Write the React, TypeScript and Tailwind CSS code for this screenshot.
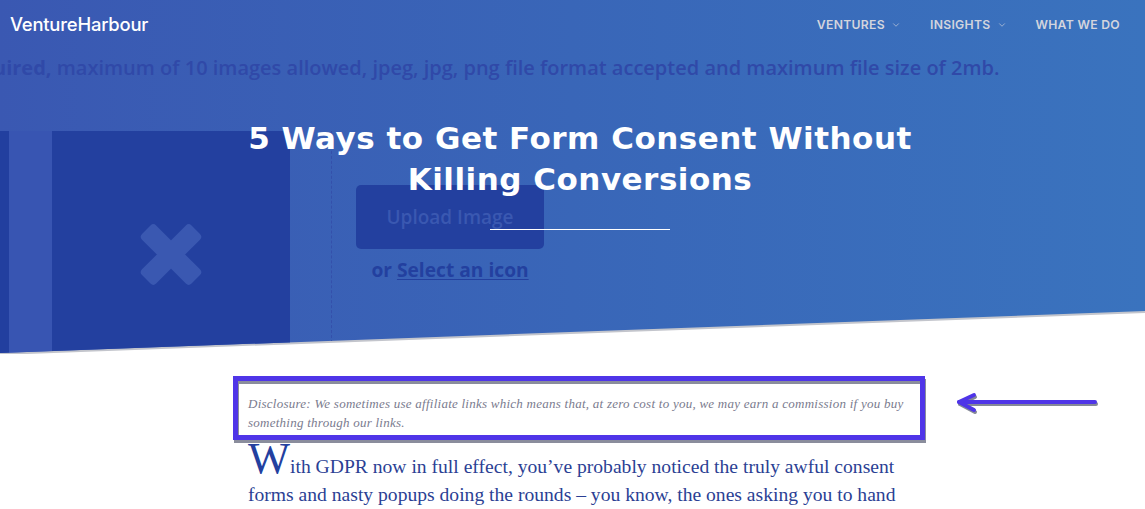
import { ChevronDown } from 'lucide-react'

const NAV = [
  { label: 'VENTURES', menu: true },
  { label: 'INSIGHTS', menu: true },
  { label: 'WHAT WE DO', menu: false },
]

// the washed-out form screenshot sitting behind the hero text
const HeroBackdrop = () => (
  <div className="absolute inset-0 flex flex-col pt-[54px] font-['Open_Sans',sans-serif]">
    <p className="-ml-[7px] h-[27px] text-[20px] leading-[27px] font-semibold whitespace-nowrap text-[#3049a8]">
      <span className="font-bold">uired,</span> maximum of 10 images allowed, jpeg, jpg, png file format accepted and maximum file size of 2mb.
    </p>
    <div className="mt-[50px] flex h-[240px]">
      <div className="w-[9px] bg-[#223f9f]" />
      <div className="w-[43px] bg-[#3855b2]" />
      <div className="flex w-[238px] justify-center bg-[#23409f] pt-[91px]">
        <svg width="64" height="65" viewBox="0 0 64 65" fill="#3a58b1">
          <rect x="-3" y="22.5" width="70" height="20" rx="4" transform="rotate(45 32 32.5)" />
          <rect x="-3" y="22.5" width="70" height="20" rx="4" transform="rotate(-45 32 32.5)" />
        </svg>
      </div>
      <div className="ml-[41px] border-l border-dashed border-[#3450ab]" />
      <div className="ml-[24px] flex flex-col items-center pt-[54px]">
        <div className="flex h-[64px] w-[188px] items-center justify-center rounded-[5px] bg-[#23409f] text-[19px] font-semibold text-[#3a58b1]">
          Upload Image
        </div>
        <p className="mt-[7px] text-[19.2px] leading-[28px] font-bold whitespace-nowrap text-[#23409f]">
          or <span className="underline underline-offset-2">Select an icon</span>
        </p>
      </div>
    </div>
  </div>
)

const Hero = () => (
  <div className="h-[354px] bg-[#c3c5cc] [clip-path:polygon(0_0,100%_0,100%_313px,0_355px)]">
    <header className="relative h-[353px] overflow-hidden bg-gradient-to-r from-[#3a58b2] via-[#3966b8] to-[#3a73be] [clip-path:polygon(0_0,100%_0,100%_311px,0_353px)]">
      <HeroBackdrop />
      <div className="relative flex h-[50px] items-center justify-between pr-[25px] pl-[10px]">
        <span className="font-['Inter',sans-serif] text-[18.4px] font-medium tracking-[-0.2px] text-white">VentureHarbour</span>
        <nav className="flex items-center gap-[29px] font-['Inter',sans-serif] text-[12.2px] font-semibold tracking-[0.3px] text-[#d3d5de]">
          {NAV.map((item) => (
            <span key={item.label} className="flex items-center gap-[6px]">
              {item.label}
              {item.menu && <ChevronDown size={10} strokeWidth={1.5} />}
            </span>
          ))}
        </nav>
      </div>
      <div className="relative flex flex-col items-center pt-[68px] pl-[15px]">
        <h1 className="w-[720px] text-center font-['DejaVu_Sans',sans-serif] text-[31px] leading-[41px] font-bold tracking-[0.5px] text-white">
          5 Ways to Get Form Consent Without
          <br />
          Killing Conversions
        </h1>
        <div className="mt-[29px] h-px w-[180px] bg-white" />
      </div>
    </header>
  </div>
)

const Disclosure = () => (
  <div className="flex items-start">
    <div className="h-[64px] w-[692px] border-[5px] border-[#4f35e8] px-[10px] pt-[13px] font-['Liberation_Serif',serif] text-[13px] leading-[19px] tracking-[0.25px] text-[#7a7b8e] italic shadow-[1px_3px_0_#8a8d9c,inset_1px_3px_0_#8a8d9c]">
      Disclosure: We sometimes use affiliate links which means that, at zero cost to you, we may earn a commission if you buy something through our links.
    </div>
    <svg className="mt-[14px] ml-[30px]" width="144" height="26" viewBox="0 0 144 26" fill="none">
      <g stroke="#858997" strokeWidth="4" strokeLinecap="round" strokeLinejoin="round" transform="translate(1 2)">
        <path d="M4 12 H140" />
        <path d="M19 5 L4 12 L19 20" />
      </g>
      <g stroke="#4f35e8" strokeWidth="4" strokeLinecap="round" strokeLinejoin="round">
        <path d="M4 12 H140" />
        <path d="M19 5 L4 12 L19 20" />
      </g>
    </svg>
  </div>
)

export default function App() {
  return (
    <div className="h-[509px] w-[1145px] overflow-hidden bg-white">
      <Hero />
      <main className="pt-[22px] pl-[233px]">
        <Disclosure />
        <p className="w-[680px] pt-[13px] pl-[15px] font-['Liberation_Serif',serif] text-[19.6px] leading-[28px] text-[#2b3f94]">
          <span className="float-left mt-[-9px] h-[28px] text-[44.5px] leading-[28px] text-[#23409f]">W</span>
          ith GDPR now in full effect, you’ve probably noticed the truly awful consent forms and nasty popups doing the rounds – you know, the ones asking you to hand
        </p>
      </main>
    </div>
  )
}
